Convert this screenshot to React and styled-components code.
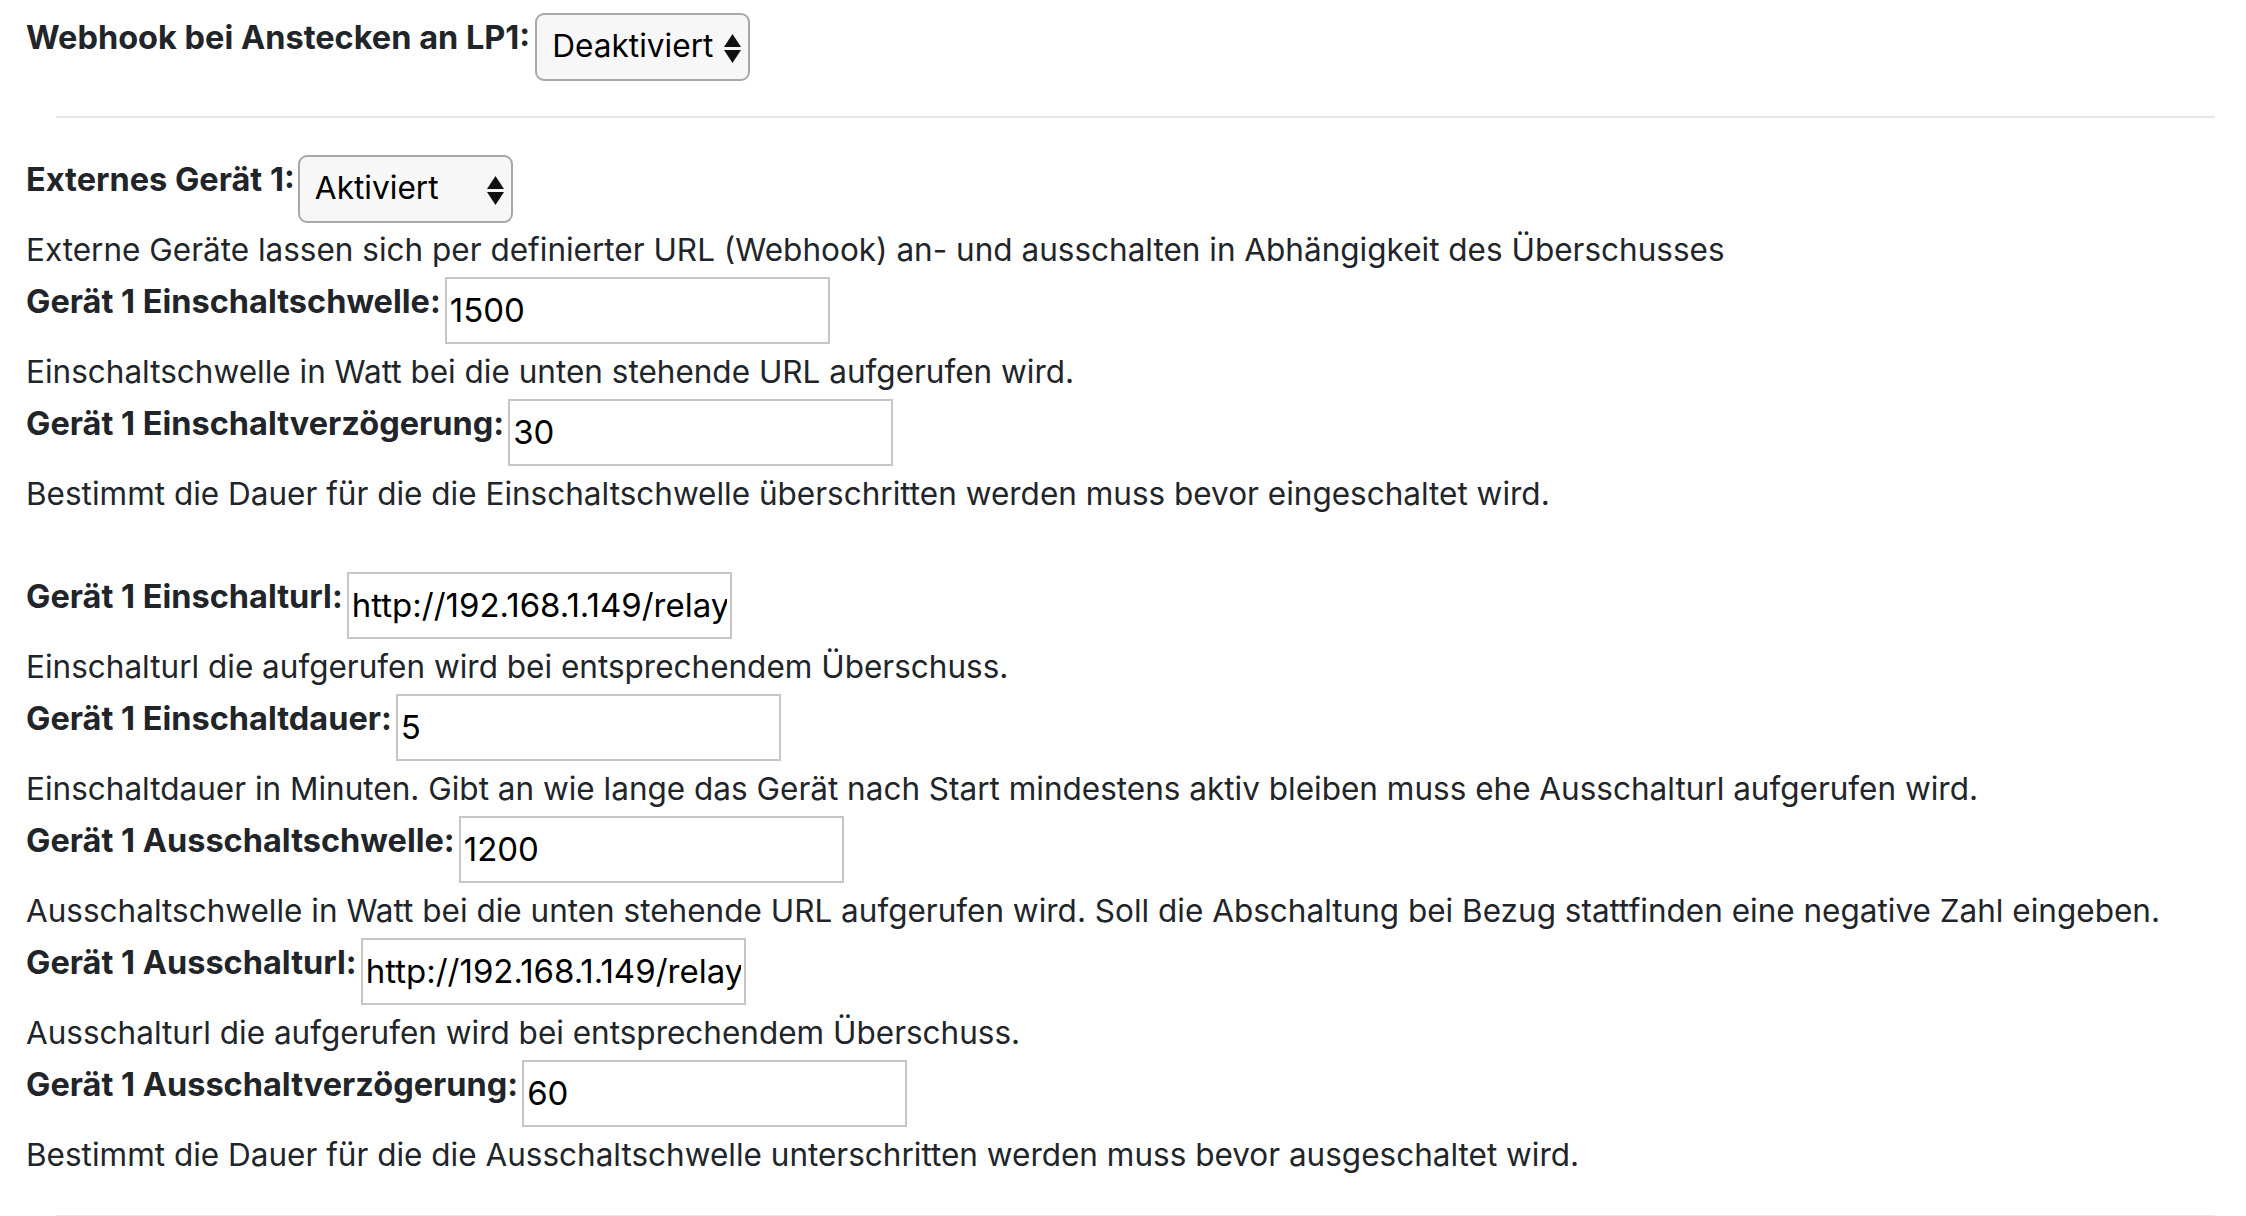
import React from "react";
import styled, { createGlobalStyle } from "styled-components";

const GlobalStyle = createGlobalStyle`
  html, body {
    margin: 0;
    padding: 0;
    background: #ffffff;
    overflow: hidden;
  }
  body {
    font-family: "Inter", "Noto Sans", sans-serif;
    color: #212529;
  }
`;

const Page = styled.div`
  padding: 13px 0 0 26px;
`;

const Field = styled.div`
  display: flex;
  align-items: flex-start;
  gap: ${(p) => (p.$gap != null ? p.$gap : 4)}px;
  height: 68px;
`;

const Label = styled.label`
  font-family: "Inter", "Noto Sans", sans-serif;
  font-weight: 700;
  font-size: 32.5px;
  line-height: 48px;
  padding-top: 1px;
  color: #212529;
  white-space: nowrap;
`;

const TextInput = styled.input`
  box-sizing: border-box;
  width: 385px;
  height: 67px;
  margin: 0;
  padding: 0 3px 1px 3px;
  border: 2px solid #c6c6c6;
  border-radius: 0;
  background: #ffffff;
  color: #000000;
  font-family: "Inter", "Noto Sans", sans-serif;
  font-weight: 400;
  font-size: 33px;
  outline: none;
`;

const SelectWrap = styled.div`
  position: relative;
  width: 215px;
  height: 68px;
  flex: none;
`;

const Select = styled.select`
  appearance: none;
  -webkit-appearance: none;
  box-sizing: border-box;
  width: 100%;
  height: 100%;
  margin: 0;
  padding: 0 34px 3px 15px;
  border: 2px solid #a8a8a8;
  border-radius: 9px;
  background: #f7f7f7;
  color: #000000;
  font-family: "Inter", "Noto Sans", sans-serif;
  font-weight: 400;
  font-size: 31.6px;
  outline: none;
`;

const Arrows = styled.svg`
  position: absolute;
  right: 9px;
  top: 21px;
  pointer-events: none;
`;

const Help = styled.div`
  font-family: "Inter", "Noto Sans", sans-serif;
  font-weight: 400;
  font-size: 31.5px;
  line-height: 54px;
  color: #212529;
  white-space: nowrap;
`;

const Divider = styled.hr`
  border: 0;
  border-top: 2px solid #e6e6e6;
  height: 0;
  margin: ${(p) => p.$top}px 31px ${(p) => p.$bottom}px 30px;
`;

const Spacer = styled.div`
  height: 51px;
`;

function UpDown() {
  return (
    <Arrows width="17" height="29" viewBox="0 0 17 29" aria-hidden="true">
      <polygon points="8.5,0 17,13 0,13" fill="#111" />
      <polygon points="0,16 17,16 8.5,29" fill="#111" />
    </Arrows>
  );
}

function SelectField({ label, value, options, gap }) {
  return (
    <Field $gap={gap}>
      <Label>{label}</Label>
      <SelectWrap>
        <Select defaultValue={value}>
          {options.map((o) => (
            <option key={o} value={o}>
              {o}
            </option>
          ))}
        </Select>
        <UpDown />
      </SelectWrap>
    </Field>
  );
}

function InputField({ label, value }) {
  return (
    <Field $gap={4}>
      <Label>{label}</Label>
      <TextInput type="text" defaultValue={value} />
    </Field>
  );
}

const fields1 = [
  {
    label: "Gerät 1 Einschaltschwelle:",
    value: "1500",
    help: "Einschaltschwelle in Watt bei die unten stehende URL aufgerufen wird.",
  },
  {
    label: "Gerät 1 Einschaltverzögerung:",
    value: "30",
    help: "Bestimmt die Dauer für die die Einschaltschwelle überschritten werden muss bevor eingeschaltet wird.",
  },
];

const fields2 = [
  {
    label: "Gerät 1 Einschalturl:",
    value: "http://192.168.1.149/relay/0?turn=on",
    help: "Einschalturl die aufgerufen wird bei entsprechendem Überschuss.",
  },
  {
    label: "Gerät 1 Einschaltdauer:",
    value: "5",
    help: "Einschaltdauer in Minuten. Gibt an wie lange das Gerät nach Start mindestens aktiv bleiben muss ehe Ausschalturl aufgerufen wird.",
  },
  {
    label: "Gerät 1 Ausschaltschwelle:",
    value: "1200",
    help: "Ausschaltschwelle in Watt bei die unten stehende URL aufgerufen wird. Soll die Abschaltung bei Bezug stattfinden eine negative Zahl eingeben.",
  },
  {
    label: "Gerät 1 Ausschalturl:",
    value: "http://192.168.1.149/relay/0?turn=off",
    help: "Ausschalturl die aufgerufen wird bei entsprechendem Überschuss.",
  },
  {
    label: "Gerät 1 Ausschaltverzögerung:",
    value: "60",
    help: "Bestimmt die Dauer für die die Ausschaltschwelle unterschritten werden muss bevor ausgeschaltet wird.",
  },
];

export default function App() {
  return (
    <>
      <GlobalStyle />
      <Page>
        <SelectField
          label="Webhook bei Anstecken an LP1:"
          value="Deaktiviert"
          options={["Deaktiviert", "Aktiviert"]}
          gap={5}
        />
        <Divider $top={35} $bottom={37} />
        <SelectField
          label="Externes Gerät 1:"
          value="Aktiviert"
          options={["Deaktiviert", "Aktiviert"]}
          gap={3}
        />
        <Help>
          Externe Geräte lassen sich per definierter URL (Webhook) an- und ausschalten in Abhängigkeit des Überschusses
        </Help>
        {fields1.map((f) => (
          <React.Fragment key={f.label}>
            <InputField label={f.label} value={f.value} />
            <Help>{f.help}</Help>
          </React.Fragment>
        ))}
        <Spacer />
        {fields2.map((f) => (
          <React.Fragment key={f.label}>
            <InputField label={f.label} value={f.value} />
            <Help>{f.help}</Help>
          </React.Fragment>
        ))}
        <Divider $top={33} $bottom={0} />
      </Page>
    </>
  );
}
